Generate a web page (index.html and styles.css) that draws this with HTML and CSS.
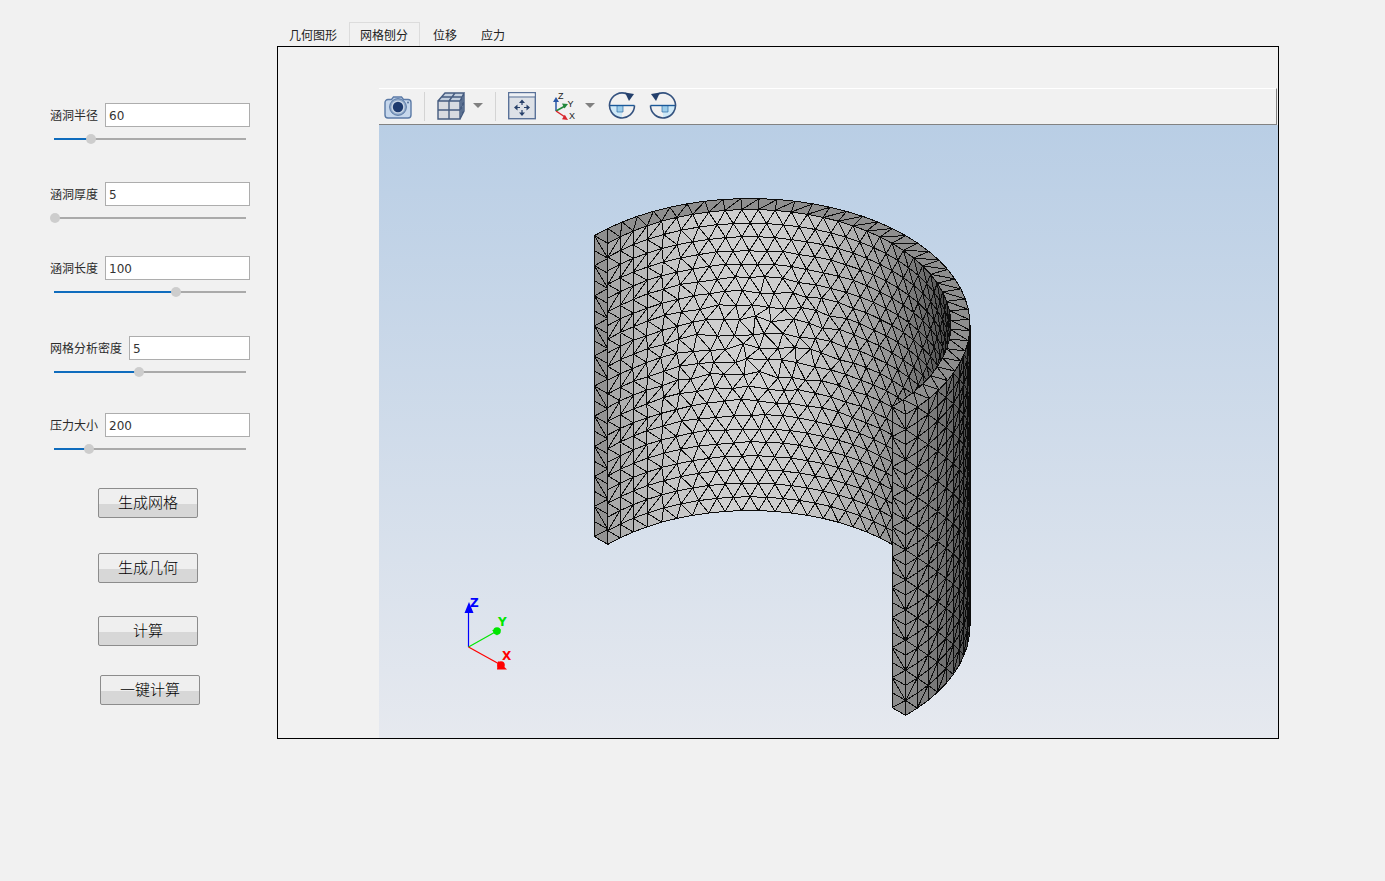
FILE: index.html
```html
<!DOCTYPE html>
<html lang="zh">
<head>
<meta charset="utf-8">
<title>涵洞分析</title>
<link rel="stylesheet" href="styles.css">
</head>
<body>
<div class="app">
  <aside class="sidebar">
    <div class="field">
      <div class="field-row"><label class="field-label">涵洞半径</label><input class="field-input" value="60"></div>
      <div class="slider"><div class="slider-fill" style="width:37px"></div><div class="slider-thumb" style="left:32px"></div></div>
    </div>
    <div class="field field-b">
      <div class="field-row"><label class="field-label">涵洞厚度</label><input class="field-input" value="5"></div>
      <div class="slider"><div class="slider-fill" style="width:1px"></div><div class="slider-thumb" style="left:-4px"></div></div>
    </div>
    <div class="field field-c">
      <div class="field-row"><label class="field-label">涵洞长度</label><input class="field-input" value="100"></div>
      <div class="slider"><div class="slider-fill" style="width:122px"></div><div class="slider-thumb" style="left:117px"></div></div>
    </div>
    <div class="field field-d">
      <div class="field-row"><label class="field-label">网格分析密度</label><input class="field-input" value="5"></div>
      <div class="slider"><div class="slider-fill" style="width:85px"></div><div class="slider-thumb" style="left:80px"></div></div>
    </div>
    <div class="field field-e">
      <div class="field-row"><label class="field-label">压力大小</label><input class="field-input" value="200"></div>
      <div class="slider"><div class="slider-fill" style="width:35px"></div><div class="slider-thumb" style="left:30px"></div></div>
    </div>
    <button class="btn btn-mesh">生成网格</button>
    <button class="btn btn-geo">生成几何</button>
    <button class="btn btn-calc">计算</button>
    <button class="btn btn-one">一键计算</button>
  </aside>

  <main class="tabs">
    <nav class="tabbar">
      <span class="tab tab-first">几何图形</span>
      <span class="tab tab-active">网格刨分</span>
      <span class="tab tab-after">位移</span>
      <span class="tab">应力</span>
    </nav>
    <section class="pane">
      <div class="toolbar">
        <svg class="ico ico-camera" viewBox="0 0 28 28">
          <path d="M1 10.5a3 3 0 0 1 3-3h3.5l2-2.5h8l2 2.5H24a3 3 0 0 1 3 3V23a3 3 0 0 1-3 3H4a3 3 0 0 1-3-3z" fill="#c6d7ec" stroke="#5b7aa6" stroke-width="1.4"/>
          <circle cx="14" cy="15" r="8.4" fill="#8fa8c8" stroke="#5b7aa6"/>
          <circle cx="14" cy="15" r="6.6" fill="#c9d6e6"/>
          <circle cx="14" cy="15" r="5.2" fill="#1d3a6e"/>
          <circle cx="24" cy="10.6" r="1" fill="#55729c"/>
        </svg>
        <span class="sep"></span>
        <svg class="ico ico-cube" viewBox="0 0 28 28">
          <path d="M1 9h22v18H1z" fill="#d8dbe1"/>
          <path d="M1 9l7-8h19l-4 8z" fill="#c3cfde"/>
          <path d="M23 9l4-8v18l-4 8z" fill="#8d9fb8"/>
          <path d="M1 9h22v18H1zM1 9l7-8h19l-4 8M23 27l4-8V1M12 9v18M1 18h22M12 9l6-8M4.500 5H25M25 5v18M23 18l4-8" fill="none" stroke="#465c80" stroke-width="1.400"/>
        </svg>
        <svg class="caret" viewBox="0 0 10 5"><path d="M0 0h10L5 5z" fill="#808080"/></svg>
        <span class="sep sep-wide"></span>
        <svg class="ico ico-fit" viewBox="0 0 28 28">
          <rect x="0.700" y="0.700" width="26.600" height="26" fill="#dde1e7" stroke="#5a7299" stroke-width="1.400"/>
          <rect x="1.400" y="1.400" width="25.200" height="3" fill="#eef1f5"/>
          <path d="M1 5h26" stroke="#5a7299"/>
          <path d="M14 7.500l-3 3.500h6zM14 24l-3-3.500h6zM6 15.500l3.500-3v6zM22 15.500l-3.500-3v6z" fill="#27406a"/>
          <path d="M14 10v3M14 18v3M9 15.500h3M16 15.500h3" stroke="#27406a" stroke-width="1.200"/>
        </svg>
        <svg class="ico-axes" viewBox="0 0 26 28">
          <path d="M4 19V8" stroke="#2a58a8" stroke-width="1.500"/>
          <path d="M4 5l-3 5h6z" fill="#2a58a8"/>
          <path d="M4 19l9-5" stroke="#22883a" stroke-width="1.500"/>
          <path d="M16 12l-6-.500 2.500 5z" fill="#22883a"/>
          <path d="M4 19l9 6" stroke="#d8262c" stroke-width="1.500"/>
          <path d="M16 28l-6-.800 2.800-4.500z" fill="#d8262c"/>
          <text x="6" y="7" class="axis-letter">Z</text>
          <text x="15.500" y="14.500" class="axis-letter">Y</text>
          <text x="17" y="26.500" class="axis-letter">X</text>
        </svg>
        <svg class="caret caret-axes" viewBox="0 0 10 5"><path d="M0 0h10L5 5z" fill="#808080"/></svg>
        <svg class="ico ico-rot" viewBox="0 0 28 28">
          <path d="M1.500 13.500H14V26A12.500 12.500 0 0 1 1.500 13.500z" fill="#cfe9f7"/>
          <path d="M9 13.500h6V20H9z" fill="#9ccdea" stroke="#2f6fa8" stroke-width=".7"/>
          <path d="M1.500 13.500h25" stroke="#1a5a9a" stroke-width="1.400"/>
          <path d="M26.500 13.500A12.500 12.500 0 1 1 19 2" fill="none" stroke="#34527f" stroke-width="1.600"/>
          <path d="M17 .5L26 2l-5 7z" fill="#24406c"/>
        </svg>
        <svg class="ico ico-rot" viewBox="0 0 28 28">
          <path d="M26.500 13.500H14V26A12.500 12.500 0 0 0 26.500 13.500z" fill="#cfe9f7"/>
          <path d="M13 13.500h6V20h-6z" fill="#9ccdea" stroke="#2f6fa8" stroke-width=".7"/>
          <path d="M1.500 13.500h25" stroke="#1a5a9a" stroke-width="1.400"/>
          <path d="M1.500 13.500A12.500 12.500 0 1 0 9 2" fill="none" stroke="#34527f" stroke-width="1.600"/>
          <path d="M11 .5L2 2l5 7z" fill="#24406c"/>
        </svg>
      </div>
      <div class="viewport">
        <svg class="scene" viewBox="379 125 899 613">
          <g id="mesh" class="mesh"></g>
          <path class="tri-z" d="M468.500 647V610"/>
          <path class="tri-y" d="M468.500 647L497 631"/>
          <path class="tri-x" d="M468.500 647L501 665"/>
          <path d="M469 602l-4.500 11h9z" fill="#0000ff"/>
          <circle cx="497" cy="631" r="3.800" fill="#00e600"/>
          <path d="M492 630l9-.5-4 6z" fill="#00e600"/>
          <circle cx="501" cy="665" r="3.800" fill="#ff0000"/>
          <path d="M498 661l9 8.500h-10z" fill="#ff0000"/>
          <text x="470" y="607" class="tri-label tri-label-z">Z</text>
          <text x="498" y="626" class="tri-label tri-label-y">Y</text>
          <text x="502" y="660" class="tri-label tri-label-x">X</text>
        </svg>
      </div>
    </section>
  </main>
</div>
<script src="mesh.js"></script>
</body>
</html>
```
FILE: styles.css
```css
* { box-sizing: border-box; }
html, body { margin: 0; height: 100%; }
body {
  background: #f1f1f1;
  font-family: "Noto Sans CJK SC", "Liberation Sans", sans-serif;
  font-size: 12px;
  color: #222;
}
.app { display: flex; align-items: flex-start; height: 881px; }

.sidebar {
  width: 277px;
  flex: none;
  padding: 103px 0 0 50px;
  display: flex;
  flex-direction: column;
  align-items: flex-start;
}
.field { width: 200px; }
.field-b { margin-top: 31px; }
.field-c { margin-top: 26px; }
.field-d { margin-top: 32px; }
.field-e { margin-top: 29px; }
.field-row { display: flex; align-items: center; gap: 7px; height: 24px; }
.field-label { white-space: nowrap; line-height: 24px; color: #2a2a2a; }
.field-input {
  flex: 1;
  min-width: 0;
  height: 24px;
  border: 1px solid #adadad;
  background: #fff;
  padding: 2px 0 0 3px;
  font-family: "DejaVu Sans", sans-serif;
  font-size: 12px;
  color: #333;
  outline: none;
}
.slider {
  position: relative;
  width: 192px;
  height: 2px;
  margin: 11px 0 11px 4px;
  background: #aaa;
}
.slider-fill { height: 2px; background: #0f6cbd; }
.slider-thumb {
  position: absolute;
  top: -4px;
  width: 10px;
  height: 10px;
  border-radius: 50%;
  background: #cdcdcd;
}

.btn {
  width: 100px;
  height: 30px;
  border: 1px solid #8c8c8c;
  border-radius: 2px;
  background: linear-gradient(#efefef 0, #efefef 52%, #d7d7d7 52%, #d7d7d7 100%);
  font-family: "Noto Sans CJK SC", sans-serif;
  font-size: 15px;
  font-weight: 300;
  color: #000;
  padding: 0 0 3px;
  margin-left: 48px;
}
.btn-mesh { margin-top: 27px; }
.btn-geo { margin-top: 35px; }
.btn-calc { margin-top: 33px; }
.btn-one { margin-top: 29px; margin-left: 50px; }

.tabs { width: 1002px; flex: none; padding-top: 22px; }
.tabbar { display: flex; height: 24px; }
.tab {
  padding: 4px 12px 0;
  line-height: 18px;
  white-space: nowrap;
  color: #222;
}
.tab-active {
  padding: 3px 11px 0 10px;
  border: 1px solid #dcdcdc;
  border-bottom: 0;
}
.tab-after { margin-left: 1px; }
.pane {
  height: 693px;
  border: 1px solid #000;
  padding: 41px 0 0 101px;
  display: flex;
  flex-direction: column;
}

.toolbar {
  height: 37px;
  flex: none;
  display: flex;
  align-items: flex-start;
  padding: 3px 0 0 5px;
  background: #f1f1f1;
  border-top: 1px solid #fff;
  border-bottom: 1px solid #828282;
  border-right: 1px solid #828282;
  margin-right: 1px;
}
.ico { width: 28px; height: 28px; flex: none; }
.ico-axes { width: 26px; height: 28px; flex: none; margin-left: 16px; overflow: visible; }
.axis-letter {
  font-family: "Liberation Sans", sans-serif;
  font-size: 9px;
  fill: #222;
}
.sep { width: 1px; height: 29px; background: #d4d4d4; margin: 0 12px; flex: none; }
.sep-wide { margin-left: 12px; }
.caret { width: 10px; height: 5px; margin: 11px 0 0 8px; flex: none; }
.caret-axes { margin-left: 7px; }
.ico-rot { margin-left: 13px; }
.ico-fit { margin-left: 0; }

.viewport {
  flex: 1;
  min-height: 0;
  background: linear-gradient(#b9cee5 0%, #e6e9ef 100%);
}
.scene { display: block; width: 100%; height: 100%; }
.mesh polygon {
  stroke: #0c0c0c;
  stroke-width: 1;
  shape-rendering: crispEdges;
  stroke-linejoin: bevel;
}
.tri-z { stroke: #0000ff; stroke-width: 1.200; fill: none; }
.tri-y { stroke: #00e600; stroke-width: 1.200; fill: none; }
.tri-x { stroke: #ff0000; stroke-width: 1.200; fill: none; }
.tri-label {
  font-family: "DejaVu Sans", sans-serif;
  font-size: 12px;
  font-weight: 700;
}
.tri-label-z { fill: #0000ff; }
.tri-label-y { fill: #00e600; }
.tri-label-x { fill: #ff0000; }
```
FILE: mesh.js
```js
(function () {
  var cx = 750, cy = 325, H = 301;
  var Ra = 220, Rb = 126.5, ra = 201, rb = 115.5;
  var DEG = Math.PI / 180;
  var out = [];
  var seed = 7;
  function rnd() { seed = (seed * 16807) % 2147483647; return seed / 2147483647 - 0.5; }
  function pt(a, b, t, h) { return [cx + a * Math.cos(t * DEG), cy - b * Math.sin(t * DEG) + h]; }
  function grey(v) {
    v = Math.max(30, Math.min(235, Math.round(v)));
    return "rgb(" + v + "," + v + "," + v + ")";
  }
  function poly(ps, v) {
    var s = ps.map(function (p) { return p[0].toFixed(1) + "," + p[1].toFixed(1); }).join(" ");
    out.push('<polygon points="' + s + '" fill="' + grey(v) + '"/>');
  }
  function innerShade(t) {
    var s = Math.max(0, Math.sin(t * DEG));
    var e = t > 90 ? 1.0 : 1.6;
    return 58 + 150 * Math.pow(s, e);
  }
  function outerShade(t) { return 52 + 124 * Math.abs(Math.sin(t * DEG)); }

  /* inner wall: triangular lattice that relaxes to quads at the cut, disturbed mid-wall */
  var du = 180 / 38, rows = 22, cols = 29, g = [], i, j;
  for (j = 0; j <= rows; j++) {
    g[j] = [];
    for (i = 0; i <= cols; i++) {
      var fade = Math.max(0, Math.min(1, (i - 3) / 4));
      var shift = (j % 2) * 0.5 * fade;
      var uu = i + shift, hh = j;
      var dt = (uu - 10) / 6, dh = (j - 10) / 5.5;
      var w = Math.exp(-(dt * dt + dh * dh));
      if (j > 0 && j < rows && i > 0) {
        uu += rnd() * 0.55 * w;
        hh += rnd() * 0.55 * w;
      }
      var t = Math.max(0, 135 - uu * du);
      g[j][i] = { t: t, p: pt(ra, rb, t, hh / rows * H) };
    }
  }
  for (j = 0; j < rows; j++) {
    for (i = 0; i < cols; i++) {
      var a = g[j][i], b = g[j][i + 1], c = g[j + 1][i], d = g[j + 1][i + 1];
      var tris = j % 2 === 0 ? [[a, b, c], [b, d, c]] : [[a, b, d], [a, d, c]];
      tris.forEach(function (tr) {
        var tm = (tr[0].t + tr[1].t + tr[2].t) / 3;
        poly([tr[0].p, tr[1].p, tr[2].p], innerShade(tm));
      });
    }
  }

  /* outer wall, visible from the silhouette to the cut */
  var segs = 10, orow = 20;
  for (j = 0; j < orow; j++) {
    for (i = 0; i < segs; i++) {
      var t0 = -i * 4.5, t1 = -(i + 1) * 4.5;
      var h0 = j * H / orow, h1 = (j + 1) * H / orow;
      var A = pt(Ra, Rb, t0, h0), B = pt(Ra, Rb, t1, h0), C = pt(Ra, Rb, t0, h1), D = pt(Ra, Rb, t1, h1);
      var v = outerShade((t0 + t1) / 2);
      if ((i + j) % 2) { poly([A, B, D], v); poly([A, D, C], v); }
      else { poly([A, B, C], v); poly([B, D, C], v); }
    }
  }

  /* top annulus */
  var step = 180 / 38;
  for (i = 0; i < 38; i++) {
    var ta = 135 - i * step, tb = 135 - (i + 1) * step;
    var O0 = pt(Ra, Rb, ta, 0), O1 = pt(Ra, Rb, tb, 0), I0 = pt(ra, rb, ta, 0), I1 = pt(ra, rb, tb, 0);
    poly([O0, O1, I0], 142);
    poly([O1, I1, I0], 142);
  }

  /* the two cut faces */
  function face(pa, pb, shade) {
    for (j = 0; j < 20; j++) {
      var y0 = j * H / 20, y1 = (j + 1) * H / 20;
      var P = [pa[0], pa[1] + y0], Q = [pb[0], pb[1] + y0], R = [pa[0], pa[1] + y1], S = [pb[0], pb[1] + y1];
      if (j % 2) { poly([P, Q, R], shade); poly([Q, S, R], shade); }
      else { poly([P, Q, S], shade); poly([P, S, R], shade); }
    }
  }
  face(pt(Ra, Rb, 135, 0), pt(ra, rb, 135, 0), 146);
  face(pt(ra, rb, -45, 0), pt(Ra, Rb, -45, 0), 140);

  document.getElementById("mesh").innerHTML = out.join("");
})();
```
